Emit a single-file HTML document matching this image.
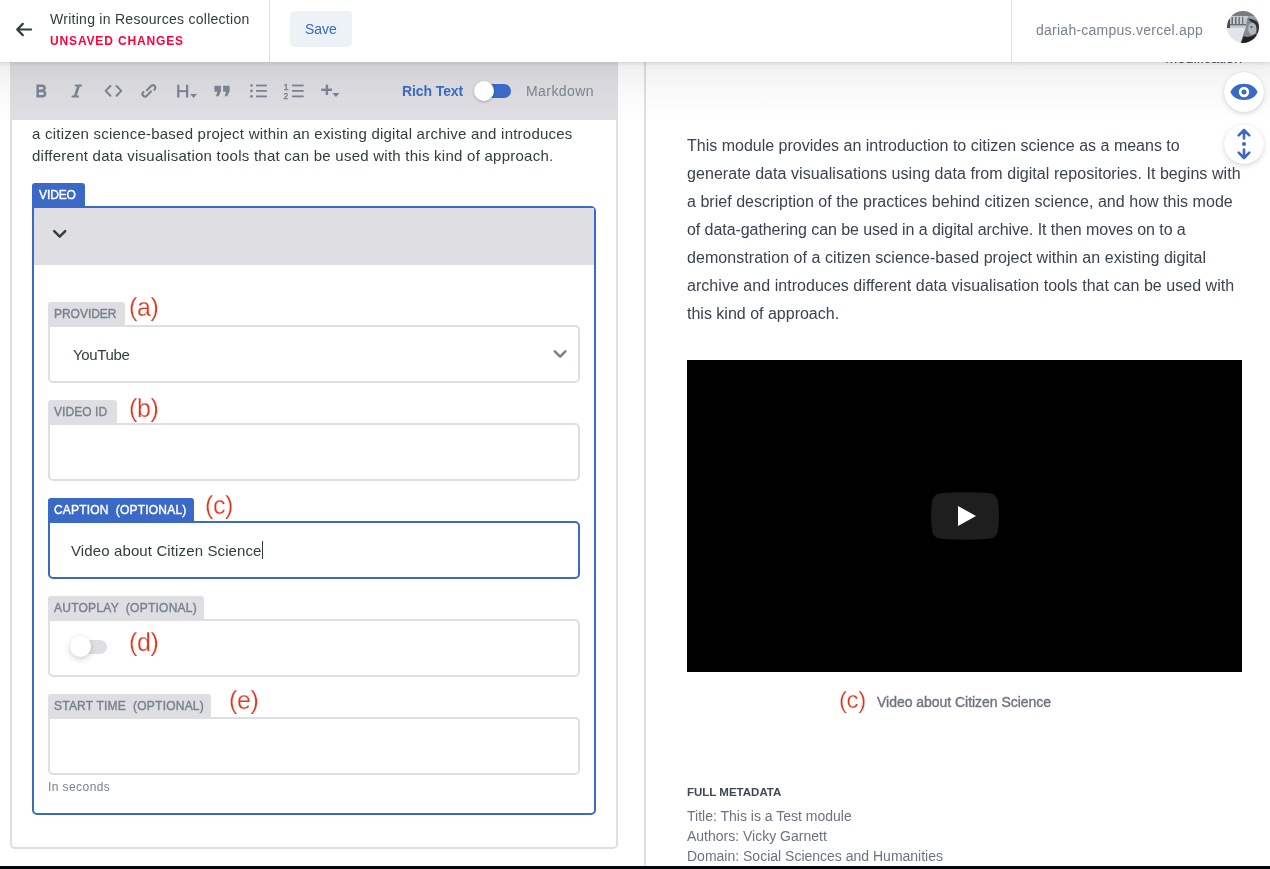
<!DOCTYPE html>
<html><head><meta charset="utf-8">
<style>
*{box-sizing:border-box;margin:0;padding:0}
html,body{width:1270px;height:869px;overflow:hidden;background:#fff;-webkit-font-smoothing:antialiased;font-family:"Liberation Sans",sans-serif;position:relative}
.a{position:absolute;white-space:nowrap;line-height:1}
#topbar{position:absolute;left:0;top:0;width:1270px;height:62px;background:#fff;z-index:10;box-shadow:0 2px 6px 0 rgba(68,74,87,.06),0 1px 3px 0 rgba(68,74,87,.12)}
.vline{position:absolute;top:0;width:1px;height:62px;background:#dfdfe3}
#leftbg{position:absolute;left:0;top:62px;width:644px;height:804px;background:#fff}
#editor{position:absolute;left:10px;top:40px;width:608px;height:809px;border:2px solid #dfdfe3;border-radius:5px;background:#fff}
#toolbar{position:absolute;left:10px;top:62px;width:608px;height:58px;background:#dfdfe3}
#shade{position:absolute;left:0;top:62px;width:1270px;height:58px;background:linear-gradient(rgba(40,44,52,.075),rgba(40,44,52,.035) 40%,rgba(40,44,52,0));pointer-events:none}
#divider{position:absolute;left:644px;top:62px;width:2px;height:804px;background:#dfdfe3}
#blackstrip{position:absolute;left:0;top:866px;width:1270px;height:3px;background:#05060b;z-index:20}
.icon{position:absolute;fill:#798291}
.ann{position:absolute;color:#e4331b;font-size:25px;letter-spacing:-.4px;-webkit-text-stroke:.25px #fff;line-height:1;white-space:nowrap}
.lab{position:absolute;left:48px;height:23px;background:#dfdfe3;border-radius:3px 3px 0 0;color:#7a8291;font-size:12px;font-weight:normal;-webkit-text-stroke:.4px currentColor;letter-spacing:.4px;padding-left:6px;line-height:1;white-space:nowrap}
.lab span{position:absolute;top:6px;left:6px}
.inp{position:absolute;left:48px;width:532px;height:58px;border:2px solid #dfdfe3;border-radius:0 5px 5px 5px;background:#fff}
.ptxt{position:absolute;left:687px;font-size:16px;line-height:1;color:#3b4250;white-space:nowrap}
</style></head><body><div style="position:absolute;left:0;top:0;width:1270px;height:869px;will-change:transform">
<div id="leftbg"></div>
<div id="editor"></div>
<div id="toolbar"></div>
<div id="divider"></div>
<div id="shade"></div>

<!-- toolbar icons -->
<svg class="a" style="left:0;top:0;z-index:2" width="640" height="130" viewBox="0 0 640 130">
 <g fill="#798291">
  <path fill-rule="evenodd" d="M36.4 84.5 H42 C44.6 84.5 45.9 85.9 45.9 87.9 C45.9 89.2 45.2 90.1 44.2 90.6 C45.6 91 46.4 92.2 46.4 93.8 C46.4 96.1 44.9 97.5 42.3 97.5 H36.4 Z M38.9 86.9 V89.4 H41.6 C42.7 89.4 43.3 88.9 43.3 88.1 C43.3 87.3 42.7 86.9 41.6 86.9 Z M38.9 92.3 V95.1 H41.9 C43.1 95.1 43.8 94.6 43.8 93.7 C43.8 92.8 43.1 92.3 41.9 92.3 Z"/>
  <path d="M74.9 84.5 H82 V86.6 H79.8 L76.8 95.4 H78.9 V97.5 H71.6 V95.4 H74 L77 86.6 H74.9 Z"/>
  <path d="M190.1 94 H197 L193.55 97.9 Z"/>
  <rect x="177.2" y="84.7" width="2.2" height="12.9"/><rect x="186" y="84.7" width="2.2" height="12.9"/><rect x="177.2" y="90.2" width="11" height="1.9"/>
  <path d="M214.4 85.8 H221 V91.2 L218.6 96.3 H216 L217.4 91.8 H214.4 Z M223.1 85.8 H229.6 V91.2 L227.3 96.3 H224.7 L226.1 91.8 H223.1 Z"/>
  <circle cx="251.5" cy="85.5" r="1.35"/><circle cx="251.5" cy="90.9" r="1.35"/><circle cx="251.5" cy="96.4" r="1.35"/>
  <rect x="256" y="84.6" width="10.9" height="1.8"/><rect x="256" y="90" width="10.9" height="1.8"/><rect x="256" y="95.5" width="10.9" height="1.8"/>
  <rect x="292" y="84.6" width="11.7" height="1.8"/><rect x="292" y="90" width="11.7" height="1.8"/><rect x="292" y="95.5" width="11.7" height="1.8"/>
  <rect x="321.2" y="88.6" width="10.8" height="2.4"/><rect x="325.7" y="84.7" width="2.4" height="10.3"/>
  <path d="M332.4 93 H339.5 L335.95 97 Z"/>
 </g>
 <text x="283.6" y="89.8" font-family="Liberation Sans" font-size="9.4" fill="#798291" stroke="#798291" stroke-width=".35">1</text>
 <text x="283.5" y="98.5" font-family="Liberation Sans" font-size="8.6" fill="#798291" stroke="#798291" stroke-width=".35">2</text>
 <g fill="none" stroke="#798291" stroke-width="2" stroke-linecap="round" stroke-linejoin="round">
  <path d="M110.4 86 L105.6 90.9 L110.4 95.8 M116.5 86 L121.3 90.9 L116.5 95.8"/>
  <g transform="translate(149 90.9) rotate(-45)" stroke-width="2.1">
   <path d="M-1 -2.0 H5 A2.5 2.5 0 0 1 5 3.0 H4.6"/>
   <path d="M1 1.8 H-5 A2.5 2.5 0 0 1 -5 -3.2 H-4.6"/>
  </g>
 </g>
</svg>
<div class="a" style="left:402px;top:84px;font-size:14px;font-weight:bold;letter-spacing:-.1px;color:#3a69c7">Rich Text</div>
<div class="a" style="left:478px;top:84px;width:33px;height:14px;border-radius:7px;background:#3a69c7"></div>
<div class="a" style="left:474px;top:81px;width:20px;height:20px;border-radius:50%;background:#fff;box-shadow:0 1px 3px rgba(0,0,0,.25)"></div>
<div class="a" style="left:526px;top:84px;font-size:14px;letter-spacing:.43px;color:#798291">Markdown</div>

<!-- editor text -->
<div class="a" style="left:32px;top:126px;font-size:15px;letter-spacing:.23px;color:#313d3e">a citizen science-based project within an existing digital archive and introduces</div>
<div class="a" style="left:32px;top:148px;font-size:15px;letter-spacing:.25px;color:#313d3e">different data visualisation tools that can be used with this kind of approach.</div>

<!-- video box -->
<div class="a" style="left:32px;top:183px;width:53px;height:25px;background:#3a69c7;border-radius:3px 3px 0 0"></div>
<div class="a" style="left:39px;top:189px;font-size:12px;-webkit-text-stroke:.4px #fff;letter-spacing:-.1px;color:#fff">VIDEO</div>
<div class="a" style="left:32px;top:206px;width:564px;height:609px;border:2px solid #3a69c7;border-radius:0 5px 5px 5px"></div>
<div class="a" style="left:34px;top:208px;width:560px;height:57px;background:#dfdfe3"></div>
<svg class="a" style="left:0;top:200px" width="620" height="180" viewBox="0 200 620 180">
 <path d="M54.2 231.2 L59.7 236.6 L65.2 231.2" fill="none" stroke="#313d3e" stroke-width="2.5" stroke-linecap="round" stroke-linejoin="round"/>
</svg>

<!-- fields -->
<div class="lab" style="top:302px;width:77px"><span style="letter-spacing:-.03px">PROVIDER</span></div>
<div class="inp" style="top:325px"></div>
<div class="a" style="left:73px;top:347px;font-size:15px;letter-spacing:-.33px;color:#313d3e">YouTube</div>
<svg class="a" style="left:0;top:300px;z-index:3" width="620" height="80" viewBox="0 300 620 80">
 <path d="M554.8 351.3 L560.1 356.6 L565.4 351.3" fill="none" stroke="#798291" stroke-width="2.5" stroke-linecap="round" stroke-linejoin="round"/>
</svg>

<div class="lab" style="top:400px;width:69px"><span style="letter-spacing:.06px">VIDEO ID</span></div>
<div class="inp" style="top:423px"></div>

<div class="lab" style="top:498px;width:146px;background:#3a69c7;color:#fff"><span style="letter-spacing:.2px">CAPTION &nbsp;(OPTIONAL)</span></div>
<div class="inp" style="top:521px;border-color:#3a69c7"></div>
<div class="a" style="left:71px;top:543px;font-size:15px;letter-spacing:.12px;color:#313d3e">Video about Citizen Science</div>
<div class="a" style="left:262px;top:541px;width:1px;height:18px;background:#313d3e"></div>

<div class="lab" style="top:596px;width:156px"><span style="letter-spacing:.25px">AUTOPLAY &nbsp;(OPTIONAL)</span></div>
<div class="inp" style="top:619px"></div>
<div class="a" style="left:72px;top:640px;width:35px;height:14px;border-radius:7px;background:#dfdfe3"></div>
<div class="a" style="left:70px;top:636px;width:21px;height:21px;border-radius:50%;background:#fff;box-shadow:0 2px 6px rgba(0,0,0,.2)"></div>

<div class="lab" style="top:694px;width:163px"><span style="letter-spacing:.22px">START TIME &nbsp;(OPTIONAL)</span></div>
<div class="inp" style="top:717px"></div>
<div class="a" style="left:48px;top:781px;font-size:12px;letter-spacing:.42px;color:#798291">In seconds</div>

<!-- annotations -->
<div class="ann" style="left:129px;top:295px">(a)</div>
<div class="ann" style="left:129px;top:396px">(b)</div>
<div class="ann" style="left:205px;top:493px">(c)</div>
<div class="ann" style="left:129px;top:630px">(d)</div>
<div class="ann" style="left:229px;top:688px">(e)</div>



<!-- preview pane -->
<div class="a" style="left:1165px;top:50px;font-size:15px;letter-spacing:-.25px;color:#3b4250;z-index:1">Modification</div>
<div class="ptxt" style="top:138px">This module provides an introduction to citizen science as a means to</div>
<div class="ptxt" style="top:166px;letter-spacing:.06px">generate data visualisations using data from digital repositories. It begins with</div>
<div class="ptxt" style="top:194px;letter-spacing:.03px">a brief description of the practices behind citizen science, and how this mode</div>
<div class="ptxt" style="top:222px;letter-spacing:-.065px">of data-gathering can be used in a digital archive. It then moves on to a</div>
<div class="ptxt" style="top:250px;letter-spacing:.055px">demonstration of a citizen science-based project within an existing digital</div>
<div class="ptxt" style="top:278px;letter-spacing:.04px">archive and introduces different data visualisation tools that can be used with</div>
<div class="ptxt" style="top:306px">this kind of approach.</div>

<div class="a" style="left:1224px;top:72px;width:40px;height:40px;border-radius:50%;background:#fff;box-shadow:0 2px 5px rgba(0,0,0,.14),0 0 1px rgba(0,0,0,.15)"></div>
<div class="a" style="left:1224px;top:124px;width:40px;height:40px;border-radius:50%;background:#fff;box-shadow:0 2px 5px rgba(0,0,0,.14),0 0 1px rgba(0,0,0,.15)"></div>
<svg class="a" style="left:1224px;top:72px" width="40" height="92" viewBox="0 0 40 92">
 <path fill="#3a69c7" d="M20 11.8 C13.6 11.8 8.2 15.2 6.5 20 C8.2 24.8 13.6 28 20 28 C26.4 28 31.8 24.8 33.5 20 C31.8 15.2 26.4 11.8 20 11.8 Z M20 25.2 A5.2 5.2 0 1 1 20 14.8 A5.2 5.2 0 1 1 20 25.2 Z M20 17.5 A2.5 2.5 0 1 0 20 22.5 A2.5 2.5 0 1 0 20 17.5 Z"/>
 <g fill="none" stroke="#3a69c7" stroke-width="2.6" stroke-linecap="round" stroke-linejoin="round">
  <path d="M14.7 63.3 L20 58 L25.3 63.3 M20 58 V66.5"/>
  <path d="M14.7 80.7 L20 86 L25.3 80.7 M20 86 V77.5"/>
 </g>
 <circle cx="20" cy="72" r="2" fill="#3a69c7"/>
</svg>

<div class="a" style="left:687px;top:360px;width:555px;height:312px;background:#000"></div>
<svg class="a" style="left:931px;top:492px" width="68" height="48" viewBox="0 0 68 48">
 <path d="M66.5 7.7 C65.7 4.8 63.5 2.5 60.6 1.7 C55.3 0.3 34 0.3 34 0.3 C34 0.3 12.7 0.3 7.4 1.7 C4.5 2.5 2.3 4.8 1.5 7.7 C0.1 13 0.1 24 0.1 24 C0.1 24 0.1 35 1.5 40.3 C2.3 43.2 4.5 45.5 7.4 46.3 C12.7 47.7 34 47.7 34 47.7 C34 47.7 55.3 47.7 60.6 46.3 C63.5 45.5 65.7 43.2 66.5 40.3 C67.9 35 67.9 24 67.9 24 C67.9 24 67.9 13 66.5 7.7 Z" fill="#212121" fill-opacity=".9"/>
 <path d="M27 14 L45 24 L27 34 Z" fill="#fff"/>
</svg>
<div class="ann" style="left:839px;top:688px;font-size:24px">(c)</div>
<div class="a" style="left:877px;top:695px;font-size:14px;letter-spacing:-.03px;-webkit-text-stroke:.35px #6b7280;color:#6b7280">Video about Citizen Science</div>

<div class="a" style="left:687px;top:787px;font-size:11.5px;font-weight:bold;color:#3f4753">FULL METADATA</div>
<div class="a" style="left:687px;top:809px;font-size:14px;color:#6b7280">Title: This is a Test module</div>
<div class="a" style="left:687px;top:829px;font-size:14px;color:#6b7280">Authors: Vicky Garnett</div>
<div class="a" style="left:687px;top:849px;font-size:14px;color:#6b7280">Domain: Social Sciences and Humanities</div>

<!-- top bar -->
<div id="topbar">
  <svg class="a" style="left:14px;top:21px" width="20" height="17" viewBox="0 0 20 17"><path d="M8.8 2.9 L3.2 8.5 L8.8 14.1 M3.2 8.5 H17.1" stroke="#313d3e" stroke-width="2.2" fill="none" stroke-linecap="round" stroke-linejoin="round"/></svg>
  <div class="a" style="left:50px;top:12px;font-size:14px;letter-spacing:.27px;color:#313d3e">Writing in Resources collection</div>
  <div class="a" style="left:50px;top:35px;font-size:12px;font-weight:bold;color:#ff003b;letter-spacing:.85px">UNSAVED CHANGES</div>
  <div class="vline" style="left:269px"></div>
  <div class="a" style="left:290px;top:11px;width:62px;height:36px;background:#edf2f7;border-radius:5px"></div>
  <div class="a" style="left:305px;top:22px;font-size:14px;color:#3a69c7">Save</div>
  <div class="vline" style="left:1011px"></div>
  <div class="a" style="left:1036px;top:23px;font-size:14px;letter-spacing:.25px;color:#798291">dariah-campus.vercel.app</div>
  <svg class="a" style="left:1227px;top:11px" width="32" height="32" viewBox="0 0 32 32">
 <defs><clipPath id="avc"><circle cx="16" cy="16" r="16"/></clipPath><filter id="avb"><feGaussianBlur stdDeviation=".45"/></filter></defs>
 <g clip-path="url(#avc)"><g filter="url(#avb)">
  <rect x="-2" y="-2" width="36" height="36" fill="#9ca1a8"/>
  <rect x="-2" y="-2" width="36" height="7" fill="#767b82"/>
  <rect x="2" y="5" width="19" height="12" fill="#c6cacf"/>
  <g fill="#686e75"><rect x="4.5" y="6" width="1.5" height="7"/><rect x="8" y="6" width="1.5" height="7"/><rect x="11.5" y="6" width="1.4" height="7"/><rect x="15" y="6" width="1.3" height="7"/><rect x="3" y="13" width="16" height="1.4"/></g>
  <rect x="-2" y="8" width="5" height="12" fill="#454b51"/>
  <path d="M-2 17 H19 L15 34 H-2 Z" fill="#e2e4e7"/>
  <path d="M20 7 L34 10 V34 H13 L16 24 L19 16 Z" fill="#858b92"/>
  <path d="M21 7.5 Q30 8 33 15 L33 25 L29.5 23 Q30.5 13 23.5 10.5 Z" fill="#2e3338"/>
  <ellipse cx="25.3" cy="17.8" rx="4.2" ry="6" fill="#b2b7bc"/>
  <ellipse cx="24.5" cy="16" rx="1.3" ry=".9" fill="#5c6269"/>
  <path d="M13 34 L16.8 25 Q22 27.5 28.5 23 L34 26 V34 Z" fill="#202428"/>
 </g></g>
</svg>
</div>

<div id="blackstrip"></div>
</div></body></html>
